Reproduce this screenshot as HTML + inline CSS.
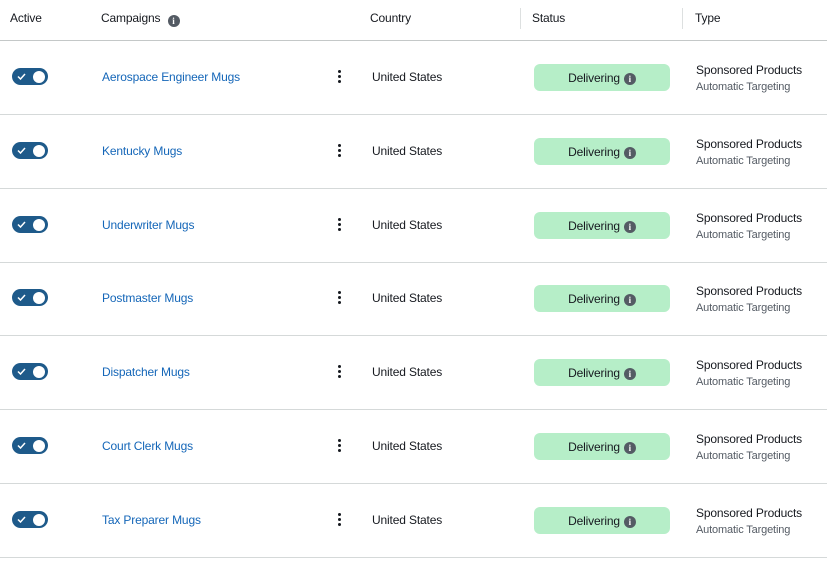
<!DOCTYPE html>
<html><head><style>
*{margin:0;padding:0;box-sizing:border-box}
body{width:827px;height:564px;background:#fff;font-family:"Liberation Sans",sans-serif;color:#16191f;position:relative;overflow:hidden;letter-spacing:-0.15px}
.h{position:absolute;top:11px;font-size:12px;color:#16191f;line-height:14px}
.div{position:absolute;top:8px;width:1px;height:21px;background:#dde0e0}
.hl{position:absolute;left:0;width:827px;height:1px;background:#d5d9d9}
.row{position:absolute;left:0;width:827px;height:74px}
.tg{position:absolute;left:12px;top:28px;width:36px;height:17px;border-radius:9px;background:#1e5a8a}
.tg .k{position:absolute;right:3px;top:2.5px;width:12px;height:12px;border-radius:50%;background:#fff}
.tg svg{position:absolute;left:5px;top:5px}
.nm{position:absolute;left:102px;top:30px;font-size:12px;color:#1466b8}
.dots{position:absolute;left:338px;top:30px;width:4px}
.dots i{display:block;width:3px;height:3px;border-radius:50%;background:#16191f;margin-bottom:2px}
.ct{position:absolute;left:372px;top:30px;font-size:12px}
.bd{position:absolute;left:534px;top:24px;width:136px;height:27px;border-radius:6px;background:#b6eec8;font-size:12px;display:flex;align-items:center;justify-content:center}
.ic{display:inline-block;width:12px;height:12px;border-radius:50%;background:#545b64;color:#fff;font-size:9px;font-weight:bold;line-height:12px;text-align:center;margin-left:4px;font-family:"Liberation Serif",serif;letter-spacing:0}
.bd .ic{margin-top:2px}
.h .ic{vertical-align:-2px}
.t1{position:absolute;left:696px;top:23px;font-size:12px}
.t2{position:absolute;left:696px;top:41px;font-size:11px;color:#545b64}
</style></head><body>
<div class="h" style="left:10px">Active</div>
<div class="h" style="left:101px">Campaigns <span class="ic">i</span></div>
<div class="h" style="left:370px">Country</div>
<div class="div" style="left:520px"></div>
<div class="h" style="left:532px">Status</div>
<div class="div" style="left:682px"></div>
<div class="h" style="left:695px">Type</div>
<div class="hl" style="top:40px;background:#c4c8c8"></div>

<div class="row" style="top:40px"><div class="tg"><svg width="9" height="7" viewBox="0 0 9 7"><path d="M1 3.5L3.5 6L8 1" stroke="#fff" stroke-width="1.5" fill="none"/></svg><div class="k"></div></div><div class="nm">Aerospace Engineer Mugs</div><div class="dots"><i></i><i></i><i></i></div><div class="ct">United States</div><div class="bd">Delivering <span class="ic">i</span></div><div class="t1">Sponsored Products</div><div class="t2">Automatic Targeting</div></div>
<div class="hl" style="top:114px"></div>
<div class="row" style="top:114px"><div class="tg"><svg width="9" height="7" viewBox="0 0 9 7"><path d="M1 3.5L3.5 6L8 1" stroke="#fff" stroke-width="1.5" fill="none"/></svg><div class="k"></div></div><div class="nm">Kentucky Mugs</div><div class="dots"><i></i><i></i><i></i></div><div class="ct">United States</div><div class="bd">Delivering <span class="ic">i</span></div><div class="t1">Sponsored Products</div><div class="t2">Automatic Targeting</div></div>
<div class="hl" style="top:188px"></div>
<div class="row" style="top:188px"><div class="tg"><svg width="9" height="7" viewBox="0 0 9 7"><path d="M1 3.5L3.5 6L8 1" stroke="#fff" stroke-width="1.5" fill="none"/></svg><div class="k"></div></div><div class="nm">Underwriter Mugs</div><div class="dots"><i></i><i></i><i></i></div><div class="ct">United States</div><div class="bd">Delivering <span class="ic">i</span></div><div class="t1">Sponsored Products</div><div class="t2">Automatic Targeting</div></div>
<div class="hl" style="top:262px"></div>
<div class="row" style="top:261px"><div class="tg"><svg width="9" height="7" viewBox="0 0 9 7"><path d="M1 3.5L3.5 6L8 1" stroke="#fff" stroke-width="1.5" fill="none"/></svg><div class="k"></div></div><div class="nm">Postmaster Mugs</div><div class="dots"><i></i><i></i><i></i></div><div class="ct">United States</div><div class="bd">Delivering <span class="ic">i</span></div><div class="t1">Sponsored Products</div><div class="t2">Automatic Targeting</div></div>
<div class="hl" style="top:335px"></div>
<div class="row" style="top:335px"><div class="tg"><svg width="9" height="7" viewBox="0 0 9 7"><path d="M1 3.5L3.5 6L8 1" stroke="#fff" stroke-width="1.5" fill="none"/></svg><div class="k"></div></div><div class="nm">Dispatcher Mugs</div><div class="dots"><i></i><i></i><i></i></div><div class="ct">United States</div><div class="bd">Delivering <span class="ic">i</span></div><div class="t1">Sponsored Products</div><div class="t2">Automatic Targeting</div></div>
<div class="hl" style="top:409px"></div>
<div class="row" style="top:409px"><div class="tg"><svg width="9" height="7" viewBox="0 0 9 7"><path d="M1 3.5L3.5 6L8 1" stroke="#fff" stroke-width="1.5" fill="none"/></svg><div class="k"></div></div><div class="nm">Court Clerk Mugs</div><div class="dots"><i></i><i></i><i></i></div><div class="ct">United States</div><div class="bd">Delivering <span class="ic">i</span></div><div class="t1">Sponsored Products</div><div class="t2">Automatic Targeting</div></div>
<div class="hl" style="top:483px"></div>
<div class="row" style="top:483px"><div class="tg"><svg width="9" height="7" viewBox="0 0 9 7"><path d="M1 3.5L3.5 6L8 1" stroke="#fff" stroke-width="1.5" fill="none"/></svg><div class="k"></div></div><div class="nm">Tax Preparer Mugs</div><div class="dots"><i></i><i></i><i></i></div><div class="ct">United States</div><div class="bd">Delivering <span class="ic">i</span></div><div class="t1">Sponsored Products</div><div class="t2">Automatic Targeting</div></div>
<div class="hl" style="top:557px"></div>
</body></html>
